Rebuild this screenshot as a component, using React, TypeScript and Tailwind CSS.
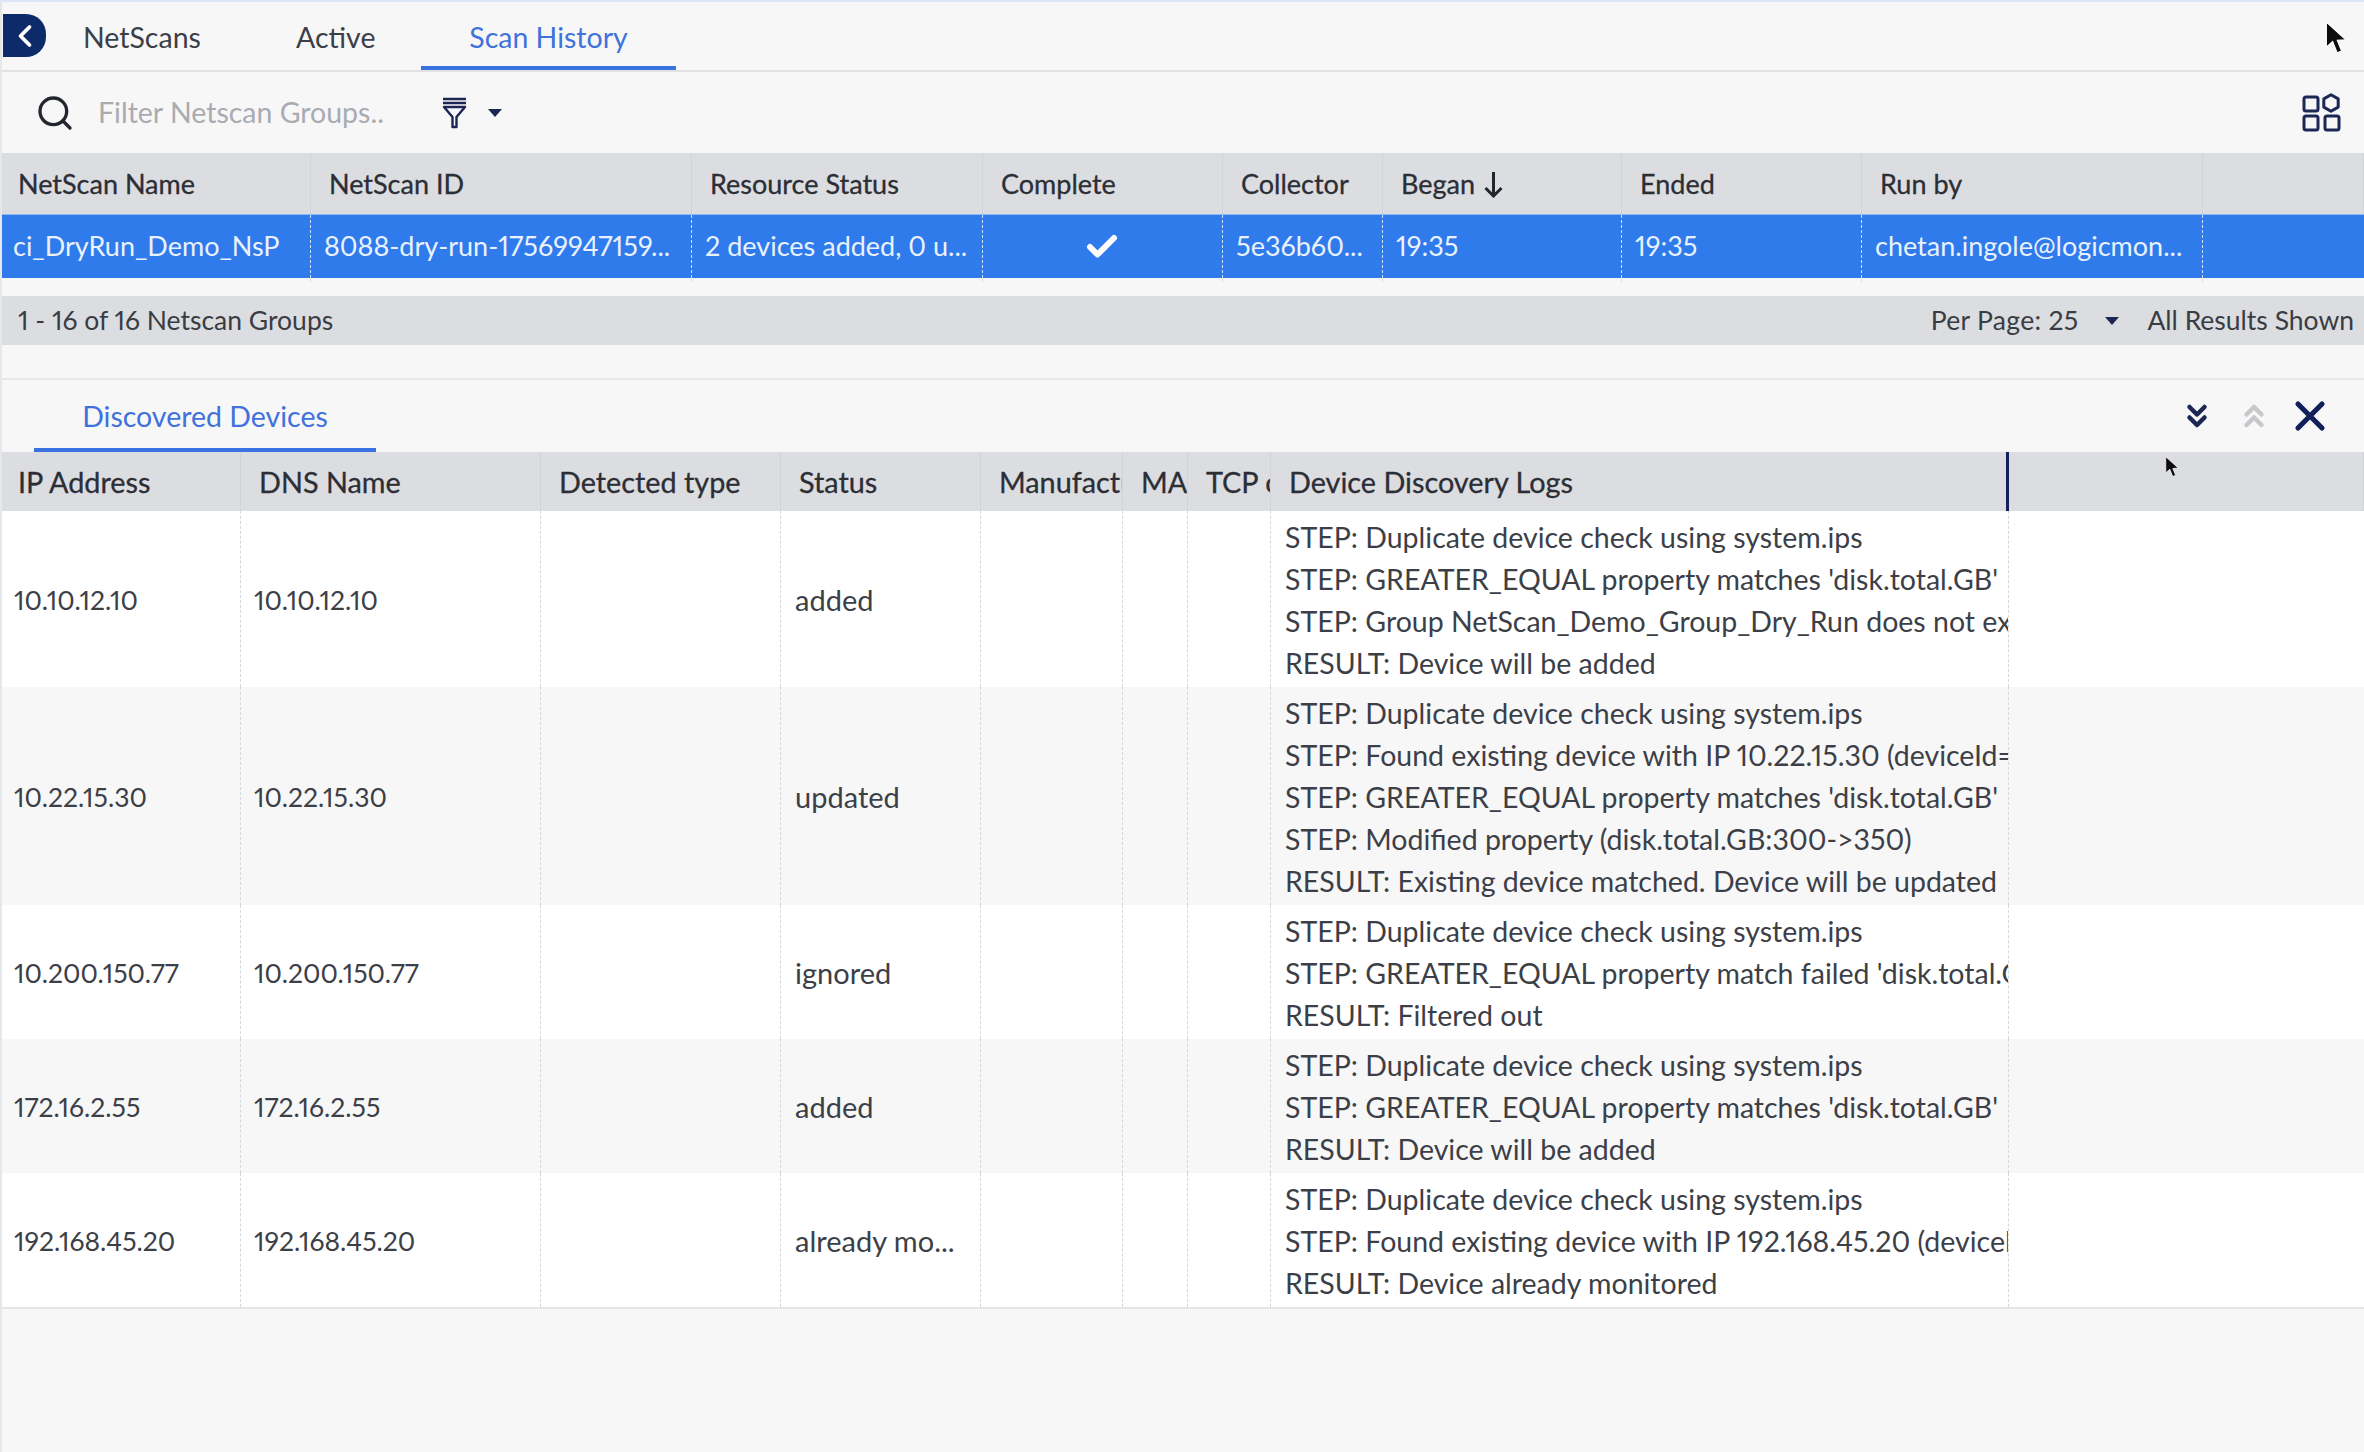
import { ChevronLeft, Search, Check, X, ChevronsDown, ChevronsUp } from 'lucide-react';

const scanColumns = [
  'NetScan Name',
  'NetScan ID',
  'Resource Status',
  'Complete',
  'Collector',
  'Began',
  'Ended',
  'Run by',
  '',
];

const scanCells = [
  'ci_DryRun_Demo_NsP',
  '8088-dry-run-17569947159...',
  '2 devices added, 0 u...',
  '',
  '5e36b60...',
  '19:35',
  '19:35',
  'chetan.ingole@logicmon...',
  '',
];

const deviceColumns = [
  'IP Address',
  'DNS Name',
  'Detected type',
  'Status',
  'Manufacturer',
  'MAC',
  'TCP open',
  'Device Discovery Logs',
  '',
];

const devices = [
  {
    ip: '10.10.12.10',
    status: 'added',
    logs: [
      'STEP: Duplicate device check using system.ips',
      "STEP: GREATER_EQUAL property matches 'disk.total.GB'",
      'STEP: Group NetScan_Demo_Group_Dry_Run does not exist',
      'RESULT: Device will be added',
    ],
  },
  {
    ip: '10.22.15.30',
    status: 'updated',
    logs: [
      'STEP: Duplicate device check using system.ips',
      'STEP: Found existing device with IP 10.22.15.30 (deviceId=3021)',
      "STEP: GREATER_EQUAL property matches 'disk.total.GB'",
      'STEP: Modified property (disk.total.GB:300->350)',
      'RESULT: Existing device matched. Device will be updated',
    ],
  },
  {
    ip: '10.200.150.77',
    status: 'ignored',
    logs: [
      'STEP: Duplicate device check using system.ips',
      "STEP: GREATER_EQUAL property match failed 'disk.total.GB'",
      'RESULT: Filtered out',
    ],
  },
  {
    ip: '172.16.2.55',
    status: 'added',
    logs: [
      'STEP: Duplicate device check using system.ips',
      "STEP: GREATER_EQUAL property matches 'disk.total.GB'",
      'RESULT: Device will be added',
    ],
  },
  {
    ip: '192.168.45.20',
    status: 'already mo...',
    logs: [
      'STEP: Duplicate device check using system.ips',
      'STEP: Found existing device with IP 192.168.45.20 (deviceId=3044)',
      'RESULT: Device already monitored',
    ],
  },
];

const scanGrid = 'grid grid-cols-[311px_381px_291px_240px_160px_239px_240px_341px_1fr]';
const deviceGrid = 'grid grid-cols-[241px_300px_240px_200px_142px_65px_83px_738px_1fr]';

function Cursor({ className }: { className: string }) {
  return (
    <svg viewBox="0 0 19 30" className={className}>
      <path
        d="M1 1 L1 23 L6.5 18 L10.5 28 L14.5 26.4 L10.6 17 L18 16.5 Z"
        fill="#0c0c0e"
        stroke="#ffffff"
        strokeWidth="1"
      />
    </svg>
  );
}

function FilterIcon() {
  return (
    <svg viewBox="0 0 25 32" className="h-8 w-[25px]" fill="none" stroke="#1c2754">
      <path d="M1 2 H24" strokeWidth="2.5" />
      <path d="M1 6 H24" strokeWidth="2.5" />
      <path d="M2 10 H23 L14.5 20 V30 H10.5 V20 Z" strokeWidth="2.4" strokeLinejoin="round" />
    </svg>
  );
}

function TableLayoutIcon() {
  return (
    <svg viewBox="0 0 39 39" className="h-[39px] w-[39px]" fill="none" stroke="#1c2754" strokeWidth="3">
      <rect x="2" y="4" width="14" height="14" rx="2" />
      <path d="M29 1.8 L36.2 5.9 V14.1 L29 18.2 L21.8 14.1 V5.9 Z" strokeLinejoin="round" />
      <rect x="2" y="23" width="14" height="14" rx="2" />
      <rect x="23" y="23" width="14" height="14" rx="2" />
    </svg>
  );
}

function SortArrow() {
  return (
    <svg viewBox="0 0 21 27" className="h-[27px] w-[21px]" fill="none" stroke="#24262e" strokeWidth="3">
      <path d="M10.5 1 V25" />
      <path d="M2.5 17 L10.5 25 L18.5 17" />
    </svg>
  );
}

function Caret({ className }: { className: string }) {
  return (
    <svg viewBox="0 0 14 8" className={className}>
      <path d="M0 0 H14 L7 8 Z" fill="#1c2754" />
    </svg>
  );
}

function App() {
  return (
    <div className="relative flex h-screen w-full flex-col overflow-hidden bg-[#f7f7f8] font-['Lato',sans-serif] text-[28.5px] text-[#3c3f47] proportional-nums">
      <div className="flex h-[72px] shrink-0 items-end border-t-2 border-b-2 border-t-[#dfe6f7] border-b-[#e0e1e3]">
        <div className="mb-[13px] ml-[3px] flex h-[43px] w-[43px] items-center justify-center rounded-r-[20px] bg-[#0c2b68]">
          <ChevronLeft className="size-9 text-white" strokeWidth={2.5} />
        </div>
        <div className="ml-[37px] flex h-[54px] w-[117px] items-start whitespace-nowrap">NetScans</div>
        <div className="ml-[96px] flex h-[54px] w-[75px] items-start">Active</div>
        <div className="ml-[50px] flex h-[54px] w-[255px] items-start justify-center border-b-4 border-[#3a72e2] text-[#3f72dc]">
          Scan History
        </div>
      </div>

      <div className="flex h-[81px] shrink-0 items-center pr-[23px]">
        <Search className="ml-[35px] size-10 text-[#24262e]" strokeWidth={2} />
        <span className="ml-[23px] w-[344px] text-[#a9abb1]">Filter Netscan Groups..</span>
        <FilterIcon />
        <Caret className="ml-[21px] h-2 w-[14px]" />
        <div className="ml-auto">
          <TableLayoutIcon />
        </div>
      </div>

      <div className={`${scanGrid} h-[61px] shrink-0 bg-[#dcdde0] text-[27px] text-[#2c2e36] [-webkit-text-stroke:0.3px_#2c2e36]`}>
        {scanColumns.map((column) => (
          <div key={column} className="flex items-center gap-2 border-r border-[#d3d4d8] pt-[2px] pl-[18px] whitespace-nowrap">
            {column}
            {column === 'Began' && <SortArrow />}
          </div>
        ))}
      </div>
      <div className={`${scanGrid} h-[64px] shrink-0 border-t border-[#8fb8f5] bg-[#2f7bec] text-[27px] text-[#e9f1fe]`}>
        {scanCells.map((cell, index) => (
          <div
            key={index}
            className="flex items-center overflow-hidden border-r-[1.5px] border-dashed border-[#cfe0fb] pl-[13px] whitespace-nowrap last:border-r-0"
          >
            {cell}
            {index === 3 && <Check className="ml-[88px] size-9 text-white" strokeWidth={4} />}
          </div>
        ))}
      </div>
      <div className={`${scanGrid} h-[18px] shrink-0`}>
        {scanCells.map((_, index) => (
          <div key={index} className="h-1 border-r-[1.5px] border-dashed border-[#dcdde0] last:border-r-0" />
        ))}
      </div>

      <div className="flex h-[49px] shrink-0 items-center bg-[#dcdde0] pr-[10px] pl-[18px] text-[26.5px] text-[#3a3c44]">
        <span>1 - 16 of 16 Netscan Groups</span>
        <span className="ml-auto tracking-[0.3px]">Per Page: 25</span>
        <Caret className="ml-[27px] h-2 w-[14px]" />
        <span className="ml-[28px]">All Results Shown</span>
      </div>

      <div className="mt-[33px] flex h-[74px] shrink-0 items-end border-t-2 border-[#e6e7e9] pr-[30px]">
        <div className="ml-[34px] flex h-[70px] w-[342px] items-center justify-center border-b-4 border-[#3a72e2] pt-[2px] text-[#3f72dc]">
          Discovered Devices
        </div>
        <div className="mb-[12px] ml-auto flex items-center">
          <ChevronsDown className="size-9 text-[#1c2754]" strokeWidth={3} />
          <ChevronsUp className="ml-[21px] size-9 text-[#c6c8cc]" strokeWidth={3} />
          <X className="ml-[14px] size-12 text-[#12205a]" strokeWidth={2.6} />
        </div>
      </div>

      <div className={`${deviceGrid} relative h-[59px] shrink-0 bg-[#dcdde0] text-[28.8px] text-[#2c2e36] [-webkit-text-stroke:0.3px_#2c2e36]`}>
        {deviceColumns.map((column) => (
          <div key={column} className="flex items-center overflow-hidden border-r border-[#d3d4d8] pt-[2px] pl-[18px] whitespace-nowrap">
            {column}
          </div>
        ))}
      </div>

      <div className="shrink-0 border-b-2 border-[#e4e5e7]">
        {devices.map((device, index) => (
          <div key={device.ip} className={`${deviceGrid} ${index % 2 === 0 ? 'bg-white' : 'bg-[#f7f7f8]'}`}>
            <div className="flex items-center border-r border-dashed border-[#d6d7da] pt-[3px] pl-[14px] text-[26.5px]">
              {device.ip}
            </div>
            <div className="flex items-center border-r border-dashed border-[#d6d7da] pt-[3px] pl-[13px] text-[26.5px]">
              {device.ip}
            </div>
            <div className="border-r border-dashed border-[#d6d7da]" />
            <div className="flex items-center border-r border-dashed border-[#d6d7da] pt-[2px] pl-[14px] text-[29px] whitespace-nowrap">
              {device.status}
            </div>
            <div className="border-r border-dashed border-[#d6d7da]" />
            <div className="border-r border-dashed border-[#d6d7da]" />
            <div className="border-r border-dashed border-[#d6d7da]" />
            <div className="overflow-hidden border-r border-dashed border-[#d6d7da] pt-[5px] pb-[3px] pl-[14px] leading-[42px] whitespace-nowrap">
              {device.logs.map((line, lineIndex) => (
                <div key={lineIndex}>{line}</div>
              ))}
            </div>
            <div />
          </div>
        ))}
      </div>

      <div className="absolute top-[452px] left-[2006px] h-[59px] w-[3px] bg-[#12205a]" />
      <div className="absolute top-0 left-0 h-full w-[2px] bg-[#e6e7ea]" />
      <Cursor className="absolute top-[21px] left-[2325px] h-[34px] w-[22px]" />
      <Cursor className="absolute top-[456px] left-[2165px] h-[22px] w-[14px]" />
    </div>
  );
}

export default App;
